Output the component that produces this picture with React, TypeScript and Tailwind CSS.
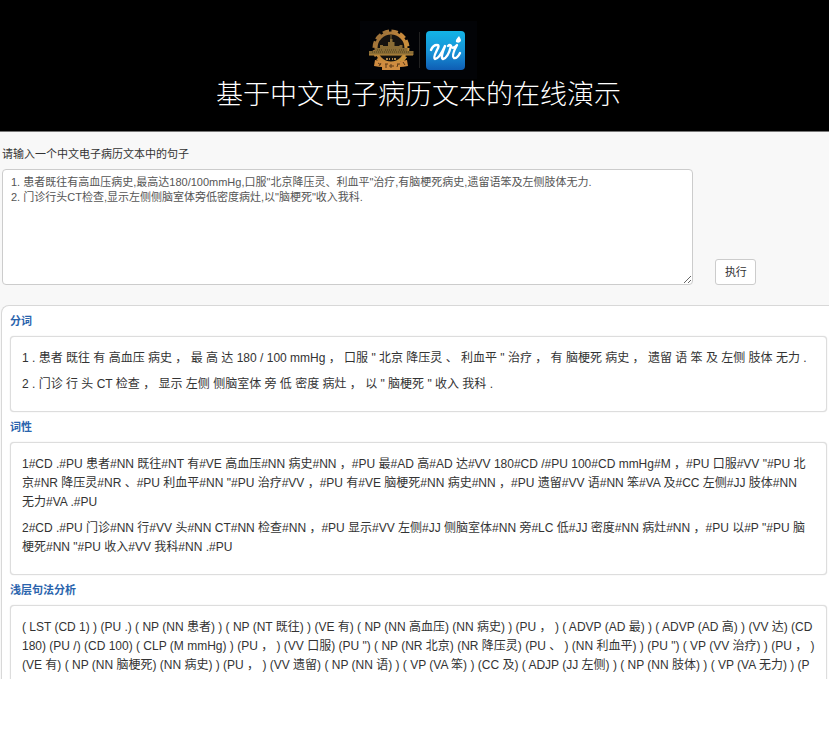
const segmented = [
  '1 . 患者 既往 有 高血压 病史 ， 最 高 达 180 / 100 mmHg ， 口服 " 北京 降压灵 、 利血平 " 治疗 ， 有 脑梗死 病史 ， 遗留 语 笨 及 左侧 肢体 无力 .',
  '2 . 门诊 行 头 CT 检查 ， 显示 左侧 侧脑室体 旁 低 密度 病灶 ， 以 " 脑梗死 " 收入 我科 .',
];

const tagged = [
  '1#CD .#PU 患者#NN 既往#NT 有#VE 高血压#NN 病史#NN ，#PU 最#AD 高#AD 达#VV 180#CD /#PU 100#CD mmHg#M ，#PU 口服#VV "#PU 北\n京#NR 降压灵#NR 、#PU 利血平#NN "#PU 治疗#VV ，#PU 有#VE 脑梗死#NN 病史#NN ，#PU 遗留#VV 语#NN 笨#VA 及#CC 左侧#JJ 肢体#NN\n无力#VA .#PU',
  '2#CD .#PU 门诊#NN 行#VV 头#NN CT#NN 检查#NN ，#PU 显示#VV 左侧#JJ 侧脑室体#NN 旁#LC 低#JJ 密度#NN 病灶#NN ，#PU 以#P "#PU 脑\n梗死#NN "#PU 收入#VV 我科#NN .#PU',
];

const parsed = [
  '( LST (CD 1) ) (PU .) ( NP (NN 患者) ) ( NP (NT 既往) ) (VE 有) ( NP (NN 高血压) (NN 病史) ) (PU ， ) ( ADVP (AD 最) ) ( ADVP (AD 高) ) (VV 达) (CD\n180) (PU /) (CD 100) ( CLP (M mmHg) ) (PU ， ) (VV 口服) (PU ") ( NP (NR 北京) (NR 降压灵) (PU 、 ) (NN 利血平) ) (PU ") ( VP (VV 治疗) ) (PU ， )\n(VE 有) ( NP (NN 脑梗死) (NN 病史) ) (PU ， ) (VV 遗留) ( NP (NN 语) ) ( VP (VA 笨) ) (CC 及) ( ADJP (JJ 左侧) ) ( NP (NN 肢体) ) ( VP (VA 无力) ) (P\nU .) )',
];

const sample =
  '1. 患者既往有高血压病史,最高达180/100mmHg,口服"北京降压灵、利血平"治疗,有脑梗死病史,遗留语笨及左侧肢体无力.\n2. 门诊行头CT检查,显示左侧侧脑室体旁低密度病灶,以"脑梗死"收入我科.';

function Seal() {
  return (
    <svg viewBox="0 0 46 42" className="h-[42px] w-[46px]" aria-hidden="true">
      <defs>
        <linearGradient id="gold" x1="0" y1="0" x2="1" y2="1">
          <stop offset="0" stopColor="#8f6a38" />
          <stop offset="0.5" stopColor="#c98a3c" />
          <stop offset="1" stopColor="#c7953a" />
        </linearGradient>
      </defs>
      <circle cx="23" cy="19" r="17" fill="none" stroke="url(#gold)" strokeWidth="3" strokeDasharray="6.4 2.5" />
      <circle cx="23" cy="19" r="15" fill="#15120f" stroke="url(#gold)" strokeWidth="3" />
      <path d="M22.5 6h1v4h1v3h2v4h5v-1h3v3h5v3h6v4H1v-4h6v-3h5v-3h3v1h5v-4h2v-3h.5z" fill="#8a6c35" />
      <path d="M4 23h38M9 21h6M17 21h12M31 21h6" stroke="#51421f" strokeWidth="1" strokeDasharray="1 1" />
      <path d="M1 26h44" stroke="#c08d3c" />
      <path d="M18 30h2M21 30h1M24 30h1M26 30h2" stroke="#b0894d" strokeWidth="2" />
      <path d="M7 31q16 4 32 0l1 6q-5 1-8 1v3H14v-3q-3 0-8-1z" fill="#d08c40" />
      <path d="M10 34l3 2m0-2l-2 3M17 35h3m-2 0v4M23 35v4m-2-2h5M29 35h3m-2 0l-1 3M35 33l2 3" stroke="#5c3b18" fill="none" />
    </svg>
  );
}

function WiMark() {
  return (
    <svg viewBox="0 0 39 39" className="size-[39px]" aria-hidden="true">
      <defs>
        <linearGradient id="sky" x1="0" y1="0" x2="0" y2="1">
          <stop offset="0" stopColor="#13b4e6" />
          <stop offset="0.55" stopColor="#1791d6" />
          <stop offset="1" stopColor="#0f5db4" />
        </linearGradient>
      </defs>
      <rect width="39" height="39" rx="4" fill="url(#sky)" />
      <g fill="none" stroke="#fff" strokeLinecap="round" strokeLinejoin="round">
        <path d="M5 19Q7 14 11 14Q14 14 11 19Q7 27 9 28Q13 28 19 15Q14 27 17 28Q22 27 25 15Q24 13 22 15" strokeWidth="2.4" />
        <path d="M25 15Q26 19 31 14Q25 25 28 27Q31 28 34 22" strokeWidth="2.4" />
      </g>
      <path d="M33 5Q29 9 30 11Q33 13 35 10Q35 8 33 5z" fill="#fff" />
    </svg>
  );
}

function Result({ title, lines }: { title: string; lines: string[] }) {
  return (
    <section>
      <h2 className="py-[6px] text-[11px] leading-[18px] font-bold text-[#2a64ad]">{title}</h2>
      <div className="rounded border border-[#ddd] bg-white px-[11px] pt-3 pb-[17px] text-[12px] leading-[19px] whitespace-pre-line text-[#333] shadow-[0_0_1px_#ccc]">
        {lines.map((line) => (
          <p key={line} className="mb-[7px] last:mb-0">
            {line}
          </p>
        ))}
      </div>
    </section>
  );
}

export default function App() {
  return (
    <div className="min-h-screen overflow-hidden bg-white font-['Liberation_Sans','Noto_Sans_CJK_SC',sans-serif] text-[#333]">
      <div className="-mr-2">
        <header className="flex flex-col items-center border-b border-[#777] bg-black pt-[21px] pb-6">
          <div className="flex items-center gap-[5px] bg-[#020306] py-2 pr-3 pl-2">
            <Seal />
            <span className="mr-px h-9 w-px bg-[#222]" />
            <WiMark />
          </div>
          <h1 className="font-['Noto_Sans_CJK_SC',serif] text-[27px] leading-7 font-light text-white">
            基于中文电子病历文本的在线演示
          </h1>
        </header>
        <main className="bg-[#f8f8f8]">
          <form className="px-[2px] pt-[14px] pb-5" onSubmit={(e) => e.preventDefault()}>
            <label htmlFor="sentence" className="block text-[11px] leading-4">
              请输入一个中文电子病历文本中的句子
            </label>
            <div className="mt-[7px] flex items-end gap-[22px]">
              <textarea
                id="sentence"
                defaultValue={sample}
                className="h-[116px] w-[83%] rounded border border-[#ccc] bg-white px-2 py-[5px] text-[11px] leading-[15px] text-[#555]"
              />
              <button type="submit" className="h-[26px] w-[41px] rounded-[3px] border border-[#ccc] bg-white text-[11px]">
                执行
              </button>
            </div>
          </form>
          <div className="ml-px h-[374px] overflow-hidden rounded-tl-lg border-t border-l border-[#d8d8d8] bg-white pr-[10px] pl-2">
            <Result title="分词" lines={segmented} />
            <Result title="词性" lines={tagged} />
            <Result title="浅层句法分析" lines={parsed} />
          </div>
        </main>
      </div>
    </div>
  );
}
